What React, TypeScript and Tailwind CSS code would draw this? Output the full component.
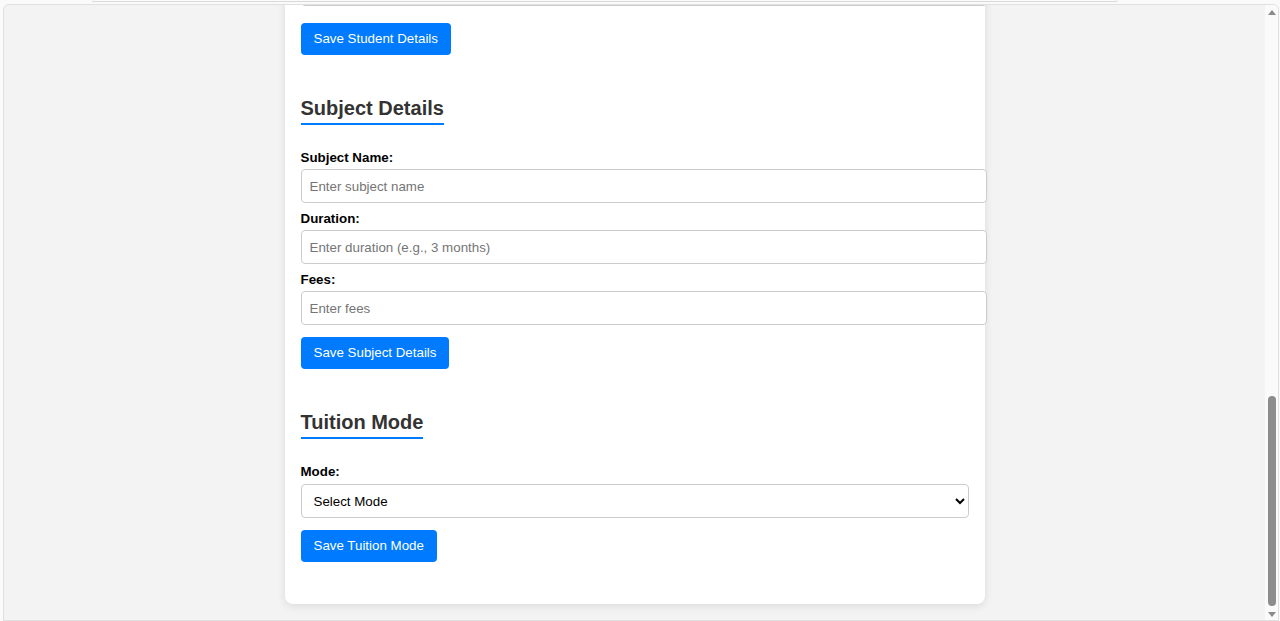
import React from "react";

const font = { fontFamily: '"Liberation Sans", Arial, sans-serif' };

function Field({ label, placeholder, last }: { label: string; placeholder: string; last?: boolean }) {
  return (
    <div>
      <label className="block text-[13.333px] font-bold leading-[18px] text-black mb-[2px]">{label}</label>
      <input
        type="text"
        placeholder={placeholder}
        className={`block w-[686px] h-[34px] px-2 text-[13.333px] border border-[#ccc] rounded-[4px] bg-white placeholder:text-[#757575] ${last ? "" : "mb-[7px]"}`}
      />
    </div>
  );
}

function SaveButton({ children }: { children: React.ReactNode }) {
  return (
    <button className="block h-8 px-[13px] text-[13.333px] leading-4 text-white bg-[#007bff] rounded-[4px]">
      {children}
    </button>
  );
}

function Heading({ children }: { children: React.ReactNode }) {
  return (
    <h2 className="inline-block text-[20px] leading-[23px] font-bold text-[#333] pb-[3px] border-b-2 border-[#007bff] mb-6">
      {children}
    </h2>
  );
}

export default function App() {
  return (
    <div className="w-[1280px] h-[621px] flex flex-col bg-[#fafafa] overflow-hidden" style={font}>
      {/* strip above the page */}
      <div className="h-1 shrink-0">
        <div className="ml-[92px] w-[1026px] h-[2px] border-b border-[#d9d9d9] rounded-b-[4px] bg-[#fbfbfb]" />
      </div>

      {/* page frame */}
      <div className="flex-1 flex ml-[3px] mr-[1px] border border-[#e0e0e0] rounded-t-[6px] overflow-hidden bg-[#f3f3f3]">
        <div className="flex-1 overflow-hidden">
          <div className="w-[700px] mx-auto bg-white rounded-b-lg shadow-[0_2px_8px_rgba(0,0,0,0.1)] px-4 pb-[42px]">
            {/* tail of the student section */}
            <input
              type="text"
              className="block w-[686px] h-[34px] -mt-[33px] border border-[#ccc] rounded-[4px] bg-white"
            />
            <div className="mt-[17px]">
              <SaveButton>Save Student Details</SaveButton>
            </div>

            <section className="mt-[42px]">
              <Heading>Subject Details</Heading>
              <Field label="Subject Name:" placeholder="Enter subject name" />
              <Field label="Duration:" placeholder="Enter duration (e.g., 3 months)" />
              <Field label="Fees:" placeholder="Enter fees" last />
              <div className="mt-3">
                <SaveButton>Save Subject Details</SaveButton>
              </div>
            </section>

            <section className="mt-[42px]">
              <Heading>Tuition Mode</Heading>
              <label className="block text-[13.333px] font-bold leading-[18px] text-black mb-[3px]">Mode:</label>
              <select className="block w-full h-[34px] px-2 text-[13.333px] text-black border border-[#ccc] rounded-[4px] bg-white">
                <option>Select Mode</option>
                <option>Online</option>
                <option>Offline</option>
              </select>
              <div className="mt-3">
                <SaveButton>Save Tuition Mode</SaveButton>
              </div>
            </section>
          </div>
        </div>

        {/* scrollbar */}
        <div className="w-[13px] shrink-0 bg-[#fafafa] flex flex-col items-center">
          <div className="mt-[5px] w-0 h-0 border-l-[4px] border-r-[4px] border-b-[5px] border-l-transparent border-r-transparent border-b-[#8a8a8a]" />
          <div className="flex-1" />
          <div className="w-[8px] h-[210px] rounded-full bg-[#8c8c8c]" />
          <div className="mt-[6px] mb-[3px] w-0 h-0 border-l-[4px] border-r-[4px] border-t-[5px] border-l-transparent border-r-transparent border-t-[#8a8a8a]" />
        </div>
      </div>
    </div>
  );
}
